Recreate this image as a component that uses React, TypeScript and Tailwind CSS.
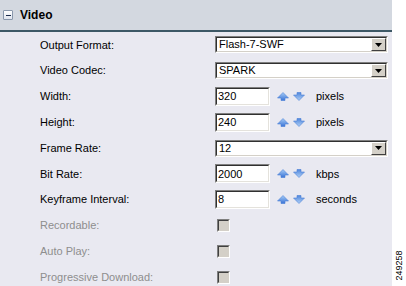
import React from "react";

const font = { fontFamily: '"Liberation Sans", Arial, sans-serif' };

function Select({ value }: { value: string }) {
  return (
    <div className="flex h-[17px] w-[173px] items-center border border-t-[#7f7f7f] border-l-[#7f7f7f] border-r-white border-b-white">
      <div className="flex h-full w-full items-center border border-t-[#303030] border-l-[#303030] border-r-[#d4d0c8] border-b-[#d4d0c8] bg-white">
        <span className="flex-1 pl-[2px] text-[11px] leading-none text-black">{value}</span>
        <div className="flex h-[13px] w-[15px] items-center justify-center border border-t-white border-l-white border-r-[#404040] border-b-[#404040] bg-[#d4d0c8]">
          <svg width="7" height="4" viewBox="0 0 7 4">
            <path d="M0 0h7L3.5 4z" fill="#000" />
          </svg>
        </div>
      </div>
    </div>
  );
}

function Arrow({ up }: { up?: boolean }) {
  return (
    <svg width="12" height="9" viewBox="0 0 12 9">
      <defs>
        <linearGradient id={up ? "gu" : "gd"} x1="0" y1="0" x2="0" y2="1">
          <stop offset="0" stopColor={up ? "#a6ccf6" : "#4f86dc"} />
          <stop offset="1" stopColor={up ? "#3a73d6" : "#b0d0f6"} />
        </linearGradient>
      </defs>
      {up ? (
        <path d="M6 0.5 L11.5 6 H8 V8.5 H4 V6 H0.5 Z" fill="url(#gu)" stroke="#4a7fd6" strokeWidth="0.6" />
      ) : (
        <path d="M4 0.5 H8 V3 H11.5 L6 8.5 L0.5 3 H4 Z" fill="url(#gd)" stroke="#4a7fd6" strokeWidth="0.6" />
      )}
    </svg>
  );
}

function Spinner({ value, unit }: { value: string; unit: string }) {
  return (
    <div className="flex items-center">
      <div className="flex h-[19px] w-[55px] items-center border border-t-[#7f7f7f] border-l-[#7f7f7f] border-r-white border-b-white">
        <div className="flex h-full w-full items-center border border-t-[#303030] border-l-[#303030] border-r-[#e4e2dc] border-b-[#e4e2dc] bg-white pl-[1px] text-[11px] text-black">
          {value}
        </div>
      </div>
      <div className="ml-[7px] flex items-center gap-[4px]">
        <Arrow up />
        <Arrow />
      </div>
      <span className="ml-[11px] text-[11px] text-black">{unit}</span>
    </div>
  );
}

function Check() {
  return (
    <div className="ml-[2px] h-[13px] w-[13px] border border-t-[#7f7f7f] border-l-[#7f7f7f] border-r-white border-b-white">
      <div className="h-full w-full border border-t-[#404040] border-l-[#404040] border-r-[#d4d0c8] border-b-[#d4d0c8] bg-[#d4d0c8]" />
    </div>
  );
}

const rows: { label: string; disabled?: boolean; control: React.ReactNode }[] = [
  { label: "Output Format:", control: <Select value="Flash-7-SWF" /> },
  { label: "Video Codec:", control: <Select value="SPARK" /> },
  { label: "Width:", control: <Spinner value="320" unit="pixels" /> },
  { label: "Height:", control: <Spinner value="240" unit="pixels" /> },
  { label: "Frame Rate:", control: <Select value="12" /> },
  { label: "Bit Rate:", control: <Spinner value="2000" unit="kbps" /> },
  { label: "Keyframe Interval:", control: <Spinner value="8" unit="seconds" /> },
  { label: "Recordable:", disabled: true, control: <Check /> },
  { label: "Auto Play:", disabled: true, control: <Check /> },
  { label: "Progressive Download:", disabled: true, control: <Check /> },
];

export default function App() {
  return (
    <div className="flex h-[286px] w-[406px] overflow-hidden bg-white" style={font}>
      <div className="flex w-[392px] flex-col bg-[#e9e9f1]">
        <div className="flex h-[32px] shrink-0 items-center border-b-2 border-[#3d5866] bg-[#d3d8e0] pl-[3px]">
          <div className="flex h-[10px] w-[10px] items-center justify-center rounded-[1px] border border-[#8a98ac] bg-gradient-to-b from-white to-[#dfe4ee]">
            <div className="h-[1px] w-[5px] bg-[#1c2c4c]" />
          </div>
          <span className="ml-[7px] text-[12px] font-bold text-black">Video</span>
        </div>
        {rows.map((r) => (
          <div key={r.label} className="flex h-[25.8px] shrink-0 items-center">
            <span className={`w-[215px] pl-[40px] text-[11px] ${r.disabled ? "text-[#8e8e8e]" : "text-black"}`}>{r.label}</span>
            {r.control}
          </div>
        ))}
      </div>
      <div className="relative flex-1">
        <span className="absolute left-[-8px] top-[261px] -rotate-90 text-[9px] leading-none text-black">249258</span>
      </div>
    </div>
  );
}
